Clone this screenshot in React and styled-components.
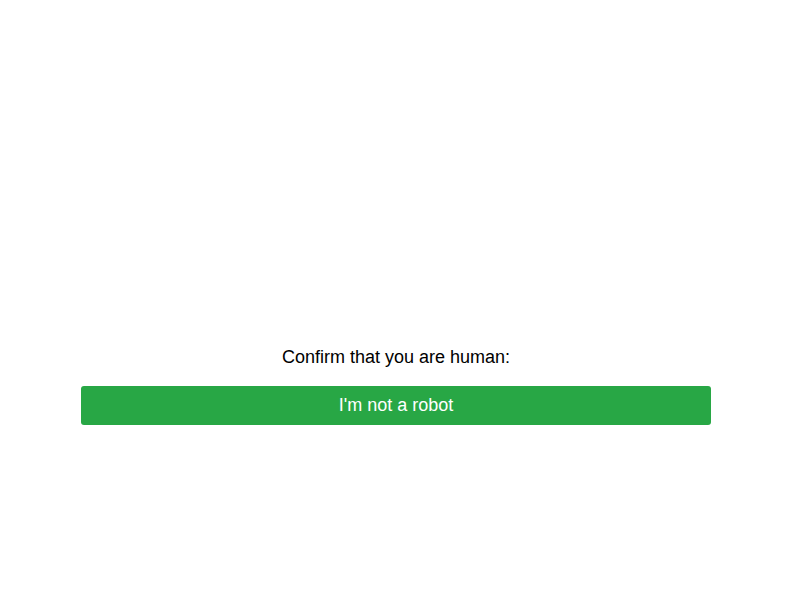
import React from 'react';
import styled, {createGlobalStyle} from 'styled-components';

const palette = {
  text: '#000000',
  background: '#ffffff',
  green: '#28a745',
  greenDark: '#218838',
};

const GlobalStyle = createGlobalStyle`
  body {
    margin: 0;
    background: ${palette.background};
    color: ${palette.text};
    font-family: "Liberation Sans", Arial, sans-serif;
    font-size: 18px;
    line-height: 21px;
  }
`;

const Container = styled.main`
  box-sizing: border-box;
  display: flex;
  flex-direction: column;
  justify-content: center;
  min-height: 100vh;
  padding: 172px 89px 0 81px;
`;

const Form = styled.form`
  display: flex;
  flex-direction: column;
  gap: 18px;
  text-align: center;
`;

const Message = styled.p`
  margin: 0;
`;

const ConfirmButton = styled.button`
  padding: 9px 16px;
  border: 0;
  border-radius: 3px;
  background: ${palette.green};
  color: ${palette.background};
  font: inherit;
  cursor: pointer;

  &:hover {
    background: ${palette.greenDark};
  }
`;

function App() {
  return (
    <>
      <GlobalStyle/>
      <Container>
        <Form onSubmit={e => e.preventDefault()}>
          <Message>Confirm that you are human:</Message>
          <ConfirmButton type="submit">I'm not a robot</ConfirmButton>
        </Form>
      </Container>
    </>
  );
}

export default App;
